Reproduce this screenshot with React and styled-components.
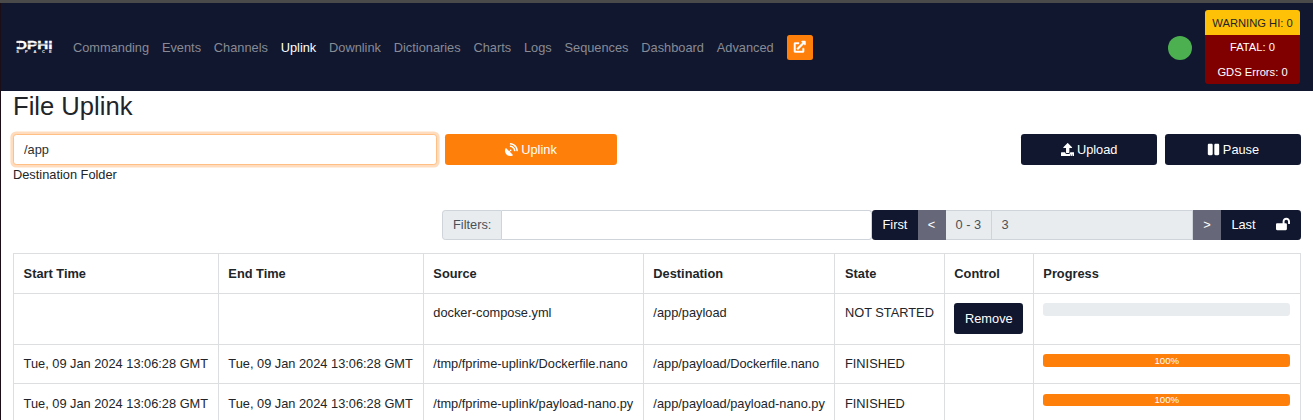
import React from "react";
import styled, { createGlobalStyle } from "styled-components";
import { FaExternalLinkAlt, FaSatelliteDish, FaUpload, FaPause, FaLockOpen } from "react-icons/fa";

const navy = "#11172e";
const orange = "#ff7f0b";
const grid = "#dcdedf";

const GlobalStyle = createGlobalStyle`
  *, *::before, *::after { box-sizing: border-box; }
  html, body { margin: 0; background: #fff; overflow: hidden; }
  body { font-family: "Liberation Sans", Arial, sans-serif; font-size: 12.8px; line-height: 19.2px; color: #212529; }
  input, button { font: inherit; margin: 0; }
`;

const Frame = styled.div`
  height: 420px;
  overflow: hidden;
  border-top: 3px solid #4a4a4a;
  box-shadow: inset 1px 0 0 #1b0e16;
  padding-left: 1px;
`;

const Navbar = styled.nav`
  display: flex;
  align-items: center;
  height: 88px;
  padding: 0 13px 0 12px;
  background: ${navy};
`;

const Logo = styled.svg`
  width: 50px;
  height: 22px;
  margin-right: 10px;
  flex: none;
`;

const NavLinks = styled.div`
  display: flex;
  gap: 12.8px;
  flex: 1;
  padding-top: 1.6px;
`;

const NavLink = styled.a`
  color: ${(p) => (p.$active ? "#fff" : "#888b96")};
  white-space: nowrap;
`;

const PopOut = styled.button`
  display: flex;
  align-items: center;
  justify-content: center;
  width: 26px;
  height: 25px;
  margin: -3px 0 -3px 0.6px;
  padding: 0 1px 2px 0;
  border: 0;
  border-radius: 2.5px;
  background: ${orange};
  color: #fff;
  font-size: 11.5px;

  svg { stroke-width: 22; overflow: visible; }
`;

const StatusDot = styled.span`
  width: 24px;
  height: 24px;
  border-radius: 50%;
  background: #4caf50;
  margin: 1px 13px 0 0;
`;

const Alerts = styled.div`
  width: 95px;
  height: 74px;
  border-radius: 3px;
  overflow: hidden;
  display: flex;
  flex-direction: column;
`;

const Alert = styled.div`
  flex: ${(p) => (p.$warning ? "0 0 25px" : "1")};
  display: flex;
  align-items: center;
  justify-content: center;
  font-size: 11.2px;
  padding-top: ${(p) => (p.$warning ? 2 : 1)}px;
  color: ${(p) => (p.$warning ? "#212529" : "#fff")};
  background: ${(p) => (p.$warning ? "#ffc107" : "#800000")};
`;

const Main = styled.main`
  padding: 0 12px;
`;

const Title = styled.h2`
  margin: 0 0 12px;
  font-size: 25.6px;
  font-weight: 400;
  line-height: 31px;
`;

const Toolbar = styled.div`
  display: flex;
  gap: 8px;
  height: 31px;
`;

const FolderInput = styled.input`
  width: 424px;
  height: 31px;
  padding: 0 10px;
  border: 1px solid #ffbf85;
  border-radius: 3.2px;
  box-shadow: 0 0 0 2.6px #ffdcbd;
  outline: 0;
  color: #2b3035;
`;

const Button = styled.button`
  display: flex;
  align-items: center;
  justify-content: center;
  gap: 3px;
  width: ${(p) => p.$width}px;
  height: 31px;
  padding: 0;
  border: 0;
  border-radius: 3.2px;
  color: #fff;
  background: ${(p) => (p.$accent ? orange : navy)};
`;

const Spacer = styled.div`
  flex: 1;
`;

const Hint = styled.div`
  margin-bottom: 26px;
`;

const FilterBar = styled.div`
  display: flex;
  height: 30px;
  margin-left: 429px;
  margin-bottom: 13px;
`;

const Addon = styled.span`
  display: flex;
  align-items: center;
  width: ${(p) => p.$width}px;
  padding: 0 0 1.6px ${(p) => p.$pad ?? 10}px;
  border: 1px solid #ced4da;
  border-left-width: ${(p) => (p.$joined ? 0 : 1)}px;
  border-radius: ${(p) => (p.$first ? "3.2px 0 0 3.2px" : 0)};
  background: #e9ecef;
  color: #495057;
`;

const FilterInput = styled.input`
  width: 370px;
  border: 1px solid #ced4da;
  border-left: 0;
  border-radius: 0 3.2px 3.2px 0;
  outline: 0;
`;

const PageButton = styled.button`
  display: flex;
  align-items: center;
  justify-content: center;
  width: ${(p) => p.$width}px;
  padding: 0 ${(p) => p.$padRight ?? 0}px 1.6px 0;
  border: 0;
  color: #fff;
  background: ${(p) => (p.$muted ? "#666879" : navy)};
  border-radius: ${(p) => (p.$edge === "left" ? "3.2px 0 0 3.2px" : p.$edge === "right" ? "0 3.2px 3.2px 0" : 0)};
`;

const Table = styled.table`
  width: 1288px;
  table-layout: fixed;
  border-collapse: collapse;
`;

const Cell = styled.td`
  padding: 9px 9px 0 9.35px;
  border: 1px solid ${grid};
  text-align: left;
  vertical-align: top;
  white-space: nowrap;

  &:first-child { padding-left: 9.6px; }
  &:nth-child(5) { padding-left: 10px; }
`;

const HeadCell = styled(Cell).attrs({ as: "th" })`
  padding-top: 10px;
  font-weight: 700;
`;

const Row = styled.tr`
  height: ${(p) => p.$height}px;

  ${Cell} { padding-top: ${(p) => p.$top}px; }
`;

const Progress = styled.div`
  height: ${(p) => p.$height}px;
  border-radius: 3.2px;
  margin-right: 0.8px;
  overflow: hidden;
  background: #e9ecef;
`;

const Bar = styled.div`
  height: 100%;
  background: ${orange};
  color: #fff;
  font-size: 9.6px;
  line-height: ${(p) => p.$line}px;
  text-align: center;
`;

const links = ["Commanding", "Events", "Channels", "Uplink", "Downlink", "Dictionaries", "Charts", "Logs", "Sequences", "Dashboard", "Advanced"];

const columns = [
  ["Start Time", 205],
  ["End Time", 205],
  ["Source", 220],
  ["Destination", 191],
  ["State", 110],
  ["Control", 89],
  ["Progress", 267],
];

const stamp = "Tue, 09 Jan 2024 13:06:28 GMT";
const files = [
  { start: "", end: "", source: "docker-compose.yml", dest: "/app/payload", state: "NOT STARTED", percent: 0, height: 51, top: 9, bar: 13 },
  { start: stamp, end: stamp, source: "/tmp/fprime-uplink/Dockerfile.nano", dest: "/app/payload/Dockerfile.nano", state: "FINISHED", percent: 100, height: 39, top: 9, bar: 13 },
  { start: stamp, end: stamp, source: "/tmp/fprime-uplink/payload-nano.py", dest: "/app/payload/payload-nano.py", state: "FINISHED", percent: 100, height: 40, top: 10, bar: 12 },
];

function BrandLogo() {
  return (
    <Logo viewBox="0 -2 50 22" fontFamily="Liberation Sans, sans-serif" fontWeight="700" fill="#fff">
      <text x="3" y="10.8" fontSize="10.8" textLength="36.5" lengthAdjust="spacingAndGlyphs" stroke="#fff" strokeWidth="0.3">DPHI</text>
      <rect x="13" y="5.6" width="27" height="0.7" fill={navy} />
      <rect x="2" y="2.6" width="4.4" height="6.2" fill={navy} />
      <rect x="3.4" y="3.1" width="7" height="1.8" />
      <text x="3.3 12 20.5 29 36" y="15" fontSize="4">SPACE</text>
    </Logo>
  );
}

export default function App() {
  return (
    <>
      <GlobalStyle />
      <Frame>
        <Navbar>
          <BrandLogo />
          <NavLinks>
            {links.map((name) => (
              <NavLink key={name} $active={name === "Uplink"}>{name}</NavLink>
            ))}
            <PopOut aria-label="Open in new window"><FaExternalLinkAlt /></PopOut>
          </NavLinks>
          <StatusDot />
          <Alerts>
            <Alert $warning>WARNING HI: 0</Alert>
            <Alert>FATAL: 0</Alert>
            <Alert>GDS Errors: 0</Alert>
          </Alerts>
        </Navbar>
        <Main>
          <Title>File Uplink</Title>
          <Toolbar>
            <FolderInput defaultValue="/app" />
            <Button $width={172} $accent><FaSatelliteDish size={13} />Uplink</Button>
            <Spacer />
            <Button $width={136}><FaUpload size={13.4} />Upload</Button>
            <Button $width={136}><FaPause size={13} />Pause</Button>
          </Toolbar>
          <Hint>Destination Folder</Hint>
          <FilterBar>
            <Addon $width={60} $first>Filters:</Addon>
            <FilterInput />
            <PageButton $width={46} $edge="left">First</PageButton>
            <PageButton $width={28} $padRight={1} $muted>&lt;</PageButton>
            <Addon $width={46} $pad={9.5} $joined>0 - 3</Addon>
            <Addon $width={201} $pad={9.5} $joined>3</Addon>
            <PageButton $width={28} $muted>&gt;</PageButton>
            <PageButton $width={45}>Last</PageButton>
            <PageButton $width={35} $padRight={2} $edge="right" aria-label="Unlock"><FaLockOpen size={14} /></PageButton>
          </FilterBar>
          <Table>
            <colgroup>
              {columns.map(([name, width]) => <col key={name} width={width} />)}
            </colgroup>
            <thead>
              <Row $height={40} $top={10}>
                {columns.map(([name]) => <HeadCell key={name}>{name}</HeadCell>)}
              </Row>
            </thead>
            <tbody>
              {files.map((f) => (
                <Row key={f.source} $height={f.height} $top={f.top}>
                  <Cell>{f.start}</Cell>
                  <Cell>{f.end}</Cell>
                  <Cell>{f.source}</Cell>
                  <Cell>{f.dest}</Cell>
                  <Cell>{f.state}</Cell>
                  <Cell>{f.percent === 0 && <Button $width={69}>Remove</Button>}</Cell>
                  <Cell>
                    <Progress $height={f.bar}>
                      {f.percent > 0 && <Bar $line={f.bar === 12 ? 12 : 14} style={{ width: `${f.percent}%` }}>{f.percent}%</Bar>}
                    </Progress>
                  </Cell>
                </Row>
              ))}
            </tbody>
          </Table>
        </Main>
      </Frame>
    </>
  );
}
